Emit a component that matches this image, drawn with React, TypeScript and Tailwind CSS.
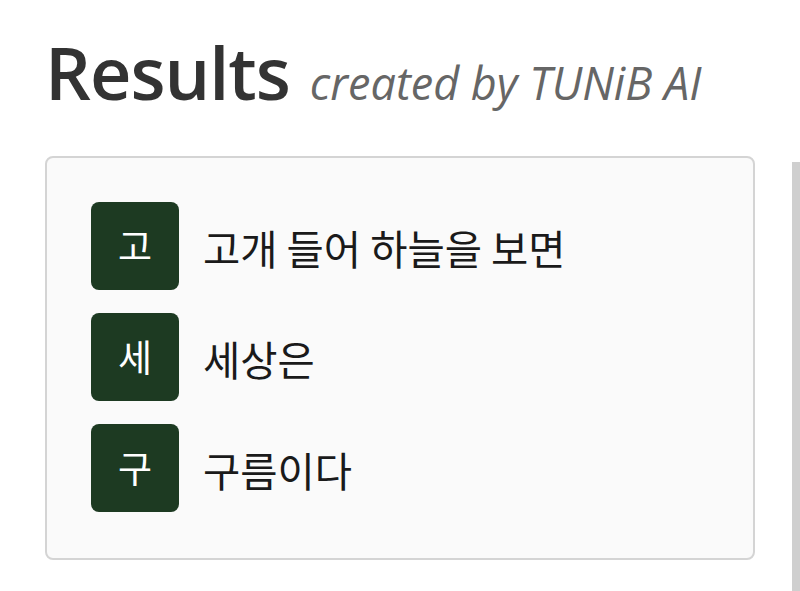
const lines = [
  { head: "고", text: "고개 들어 하늘을 보면" },
  { head: "세", text: "세상은" },
  { head: "구", text: "구름이다" },
];

export default function App() {
  return (
    <div className="relative h-[591px] w-[800px] overflow-hidden bg-white font-['Open_Sans','Noto_Sans_CJK_KR',sans-serif]">
      <div className="px-[45px] pt-[36px]">
        <h1 className="flex items-baseline gap-[20px] whitespace-nowrap">
          <span className="text-[72px] font-semibold leading-none tracking-[-1px] text-[#333]">Results</span>
          <span className="text-[45px] italic leading-none text-[#666]">created by TUNiB AI</span>
        </h1>
        <div className="mt-[48px] flex w-[710px] flex-col gap-[23px] rounded-[8px] border-2 border-[#d4d4d4] bg-[#fafafa] px-[44px] pb-[46px] pt-[44px]">
          {lines.map((l) => (
            <div key={l.head} className="flex items-center gap-[24px]">
              <div className="flex h-[88px] w-[88px] items-center justify-center rounded-[8px] bg-[#1d3a22] font-['Noto_Sans_CJK_KR',sans-serif] text-[37px] font-normal text-white">
                {l.head}
              </div>
              <span className="pt-[5px] font-['Noto_Sans_CJK_KR',sans-serif] text-[40.5px] font-normal leading-none text-[#1a1a1a]">{l.text}</span>
            </div>
          ))}
        </div>
      </div>
      <div className="absolute right-0 top-[162px] h-[429px] w-[8px] bg-[#cfcfcf]" />
    </div>
  );
}
